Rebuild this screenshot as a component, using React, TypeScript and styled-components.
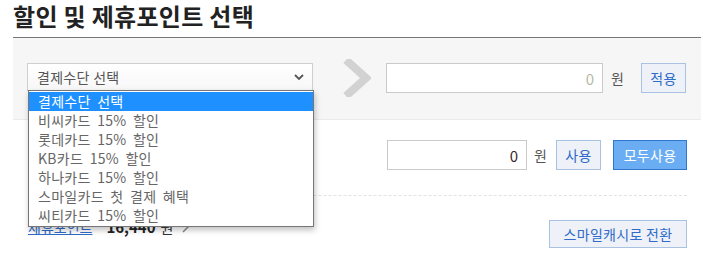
import React from "react";
import styled, { createGlobalStyle } from "styled-components";

const Global = createGlobalStyle`
  html, body { margin: 0; padding: 0; background: #fff; }
  body { font-family: "Noto Sans CJK KR", "Noto Sans", sans-serif; }
  * { box-sizing: border-box; }
`;

const Wrap = styled.div`
  width: 701px;
  padding-left: 13px;
`;

const Title = styled.h2`
  margin: 0;
  height: 37px;
  padding-top: 1px;
  font-size: 24px;
  line-height: 30px;
  font-weight: 700;
  color: #222;
  letter-spacing: 0.3px;
`;

const Panel = styled.div`
  height: 83px;
  background: #f6f6f6;
  border-top: 1px solid #777;
  border-bottom: 1px solid #ebebeb;
  padding: 25px 14px 0 14px;
  display: flex;
  align-items: flex-start;
  & > * { flex: none; }
`;

const SelectBox = styled.div`
  position: relative;
  width: 286px;
  height: 28px;
  border: 1px solid #cfcfcf;
  background: linear-gradient(#fff, #f7f7f7);
  display: flex;
  align-items: center;
  justify-content: space-between;
  padding: 0 8px 0 9px;
  font-size: 14px;
  color: #555;
  letter-spacing: 0.3px;
`;

const DropList = styled.ul`
  position: absolute;
  left: 0;
  top: 26px;
  width: 286px;
  margin: 0;
  padding: 1px 0;
  list-style: none;
  background: #fff;
  border: 1px solid #767676;
  box-shadow: 1px 3px 6px rgba(0, 0, 0, 0.25);
  z-index: 10;
`;

const Option = styled.li<{ $selected?: boolean }>`
  height: 19px;
  line-height: 19px;
  padding-left: 9px;
  font-size: 14px;
  letter-spacing: 0.3px;
  word-spacing: 3px;
  color: ${(p) => (p.$selected ? "#fff" : "#666")};
  background: ${(p) => (p.$selected ? "#1e90ff" : "transparent")};
  white-space: nowrap;
`;

const BigArrow = styled.svg`
  margin: -4px 15px 0 30px;
`;

const AmountInput = styled.div<{ $w: number; $muted?: boolean }>`
  flex: none;
  width: ${(p) => p.$w}px;
  height: 30px;
  border: 1px solid #cacaca;
  background: #fff;
  display: flex;
  align-items: center;
  justify-content: flex-end;
  padding-right: 8px;
  font-size: 15px;
  color: ${(p) => (p.$muted ? "#b5b8a8" : "#3a2626")};
`;

const Unit = styled.span<{ $ml: number }>`
  flex: none;
  margin-left: ${(p) => p.$ml}px;
  width: 14px;
  line-height: 30px;
  font-size: 14px;
  color: #555;
`;

const Btn = styled.button<{ $primary?: boolean; $ml: number; $w: number; $h?: number }>`
  flex: none;
  margin-left: ${(p) => p.$ml}px;
  width: ${(p) => p.$w}px;
  height: ${(p) => p.$h ?? 30}px;
  padding: 0;
  font-family: inherit;
  font-size: 14px;
  letter-spacing: 0.3px;
  background: ${(p) => (p.$primary ? "#6aadf2" : "#eef2f8")};
  border: 1px solid ${(p) => (p.$primary ? "#2f76cf" : "#a9c2e2")};
  color: ${(p) => (p.$primary ? "#fff" : "#2f6bc8")};
  cursor: pointer;
`;

const Row = styled.div<{ $mt: number }>`
  display: flex;
  align-items: center;
  justify-content: flex-end;
  padding: 0 14px 0 15px;
  margin-top: ${(p) => p.$mt}px;
`;

const Dashed = styled.div`
  margin: 25px 14px 0 15px;
  border-top: 1px dashed #e3e3e3;
`;

const PointRow = styled.div`
  display: flex;
  align-items: flex-start;
  justify-content: space-between;
  padding: 0 14px 0 15px;
  margin-top: 24px;
`;

const PointInfo = styled.div`
  display: flex;
  align-items: center;
  margin-top: -3px;
  line-height: 20px;
  font-size: 14px;
  color: #333;
`;

const PointLink = styled.a`
  color: #2f6bc8;
  text-decoration: underline;
  margin-right: 14px;
`;

const Strong = styled.strong`
  color: #222;
  font-size: 15px;
  margin-right: 5px;
`;

const SmallArrow = styled.svg`
  margin-left: 9px;
`;

const options = [
  "결제수단 선택",
  "비씨카드 15% 할인",
  "롯데카드 15% 할인",
  "KB카드 15% 할인",
  "하나카드 15% 할인",
  "스마일카드 첫 결제 혜택",
  "씨티카드 15% 할인",
];

export default function App() {
  return (
    <Wrap>
      <Global />
      <Title>할인 및 제휴포인트 선택</Title>
      <Panel>
        <SelectBox>
          <span>결제수단 선택</span>
          <svg width="10" height="7" viewBox="0 0 10 7">
            <path d="M1 1 L5 5 L9 1" fill="none" stroke="#555" strokeWidth="1.8" />
          </svg>
          <DropList>
            {options.map((o, i) => (
              <Option key={o} $selected={i === 0}>
                {o}
              </Option>
            ))}
          </DropList>
        </SelectBox>
        <BigArrow width="28" height="38" viewBox="0 0 28 38">
          <path d="M3 1 L23 19 L3 37" fill="none" stroke="#d2d2d2" strokeWidth="8" />
        </BigArrow>
        <AmountInput $w={217} $muted>
          0
        </AmountInput>
        <Unit $ml={8}>원</Unit>
        <Btn $ml={16} $w={45}>
          적용
        </Btn>
      </Panel>
      <Row $mt={20}>
        <AmountInput $w={140}>0</AmountInput>
        <Unit $ml={7}>원</Unit>
        <Btn $ml={8} $w={45}>
          사용
        </Btn>
        <Btn $ml={12} $w={74} $primary>
          모두사용
        </Btn>
      </Row>
      <Dashed />
      <PointRow>
        <PointInfo>
          <PointLink>제휴포인트</PointLink>
          <Strong>16,440</Strong>
          <span>원</span>
          <SmallArrow width="7" height="12" viewBox="0 0 7 12">
            <path d="M1 1 L6 6 L1 11" fill="none" stroke="#888" strokeWidth="1.5" />
          </SmallArrow>
        </PointInfo>
        <Btn $ml={0} $w={138} $h={28}>
          스마일캐시로 전환
        </Btn>
      </PointRow>
    </Wrap>
  );
}
